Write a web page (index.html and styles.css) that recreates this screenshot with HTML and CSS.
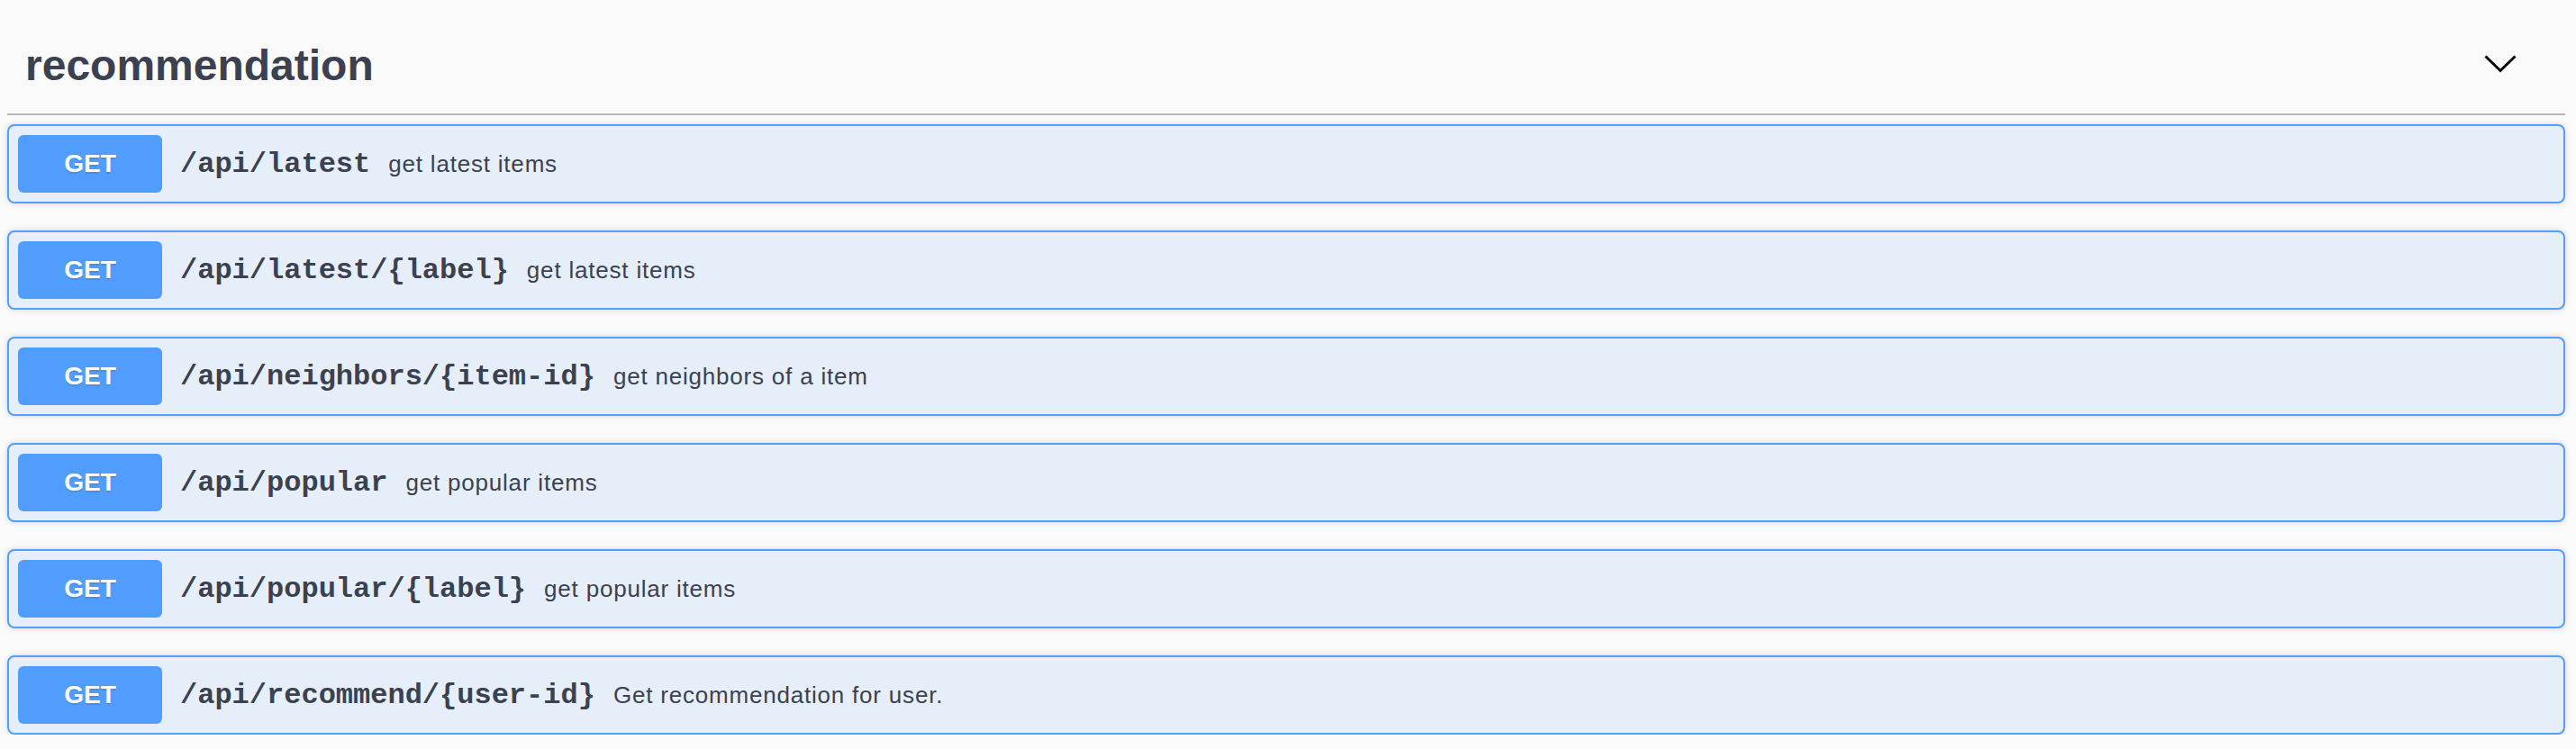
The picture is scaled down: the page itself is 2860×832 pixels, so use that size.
FILE: index.html
```html
<!DOCTYPE html>
<html lang="en">
<head>
<meta charset="utf-8">
<title>recommendation</title>
<link rel="stylesheet" href="styles.css">
</head>
<body>
<div class="section">
  <div class="tag-header">
    <h3 class="tag-title">recommendation</h3>
    <svg class="chevron" width="36" height="20" viewBox="0 0 36 20" aria-hidden="true">
      <polyline points="1.5,1.5 18,17.5 34.5,1.5" fill="none" stroke="#000" stroke-width="3"/>
    </svg>
  </div>
  <div class="ops">
    <div class="op">
      <span class="method">GET</span>
      <span class="path">/api/latest</span>
      <span class="desc">get latest items</span>
    </div>
    <div class="op">
      <span class="method">GET</span>
      <span class="path">/api/latest/{label}</span>
      <span class="desc">get latest items</span>
    </div>
    <div class="op">
      <span class="method">GET</span>
      <span class="path">/api/neighbors/{item-id}</span>
      <span class="desc">get neighbors of a item</span>
    </div>
    <div class="op">
      <span class="method">GET</span>
      <span class="path">/api/popular</span>
      <span class="desc">get popular items</span>
    </div>
    <div class="op">
      <span class="method">GET</span>
      <span class="path">/api/popular/{label}</span>
      <span class="desc">get popular items</span>
    </div>
    <div class="op">
      <span class="method">GET</span>
      <span class="path">/api/recommend/{user-id}</span>
      <span class="desc">Get recommendation for user.</span>
    </div>
  </div>
</div>
</body>
</html>
```

FILE: styles.css
```css
html, body {
  margin: 0;
  padding: 0;
  background: #fafafa;
  overflow: hidden;
}

.section {
  padding: 0 12px 0 8px;
  color: #3b4151;
  font-family: "Liberation Sans", Arial, sans-serif;
}

.tag-header {
  box-sizing: border-box;
  height: 128px;
  padding-top: 20px;
  display: flex;
  align-items: center;
  justify-content: space-between;
  border-bottom: 2px solid rgba(59, 65, 81, 0.36);
}

.tag-title {
  margin: 0;
  padding-left: 20px;
  font-size: 48px;
  line-height: 56px;
  font-weight: 700;
  color: #3b4151;
}

.chevron {
  display: block;
  margin-right: 54px;
  margin-bottom: 4px;
}

.ops {
  display: flex;
  flex-direction: column;
  gap: 30px;
  margin-top: 10px;
}

.op {
  box-sizing: border-box;
  height: 88px;
  display: flex;
  align-items: center;
  padding: 10px;
  border: 2px solid #539ffd;
  border-radius: 8px;
  background: #e6eff9;
  box-shadow: 0 0 6px rgba(0, 0, 0, 0.16);
}

.method {
  flex: 0 0 160px;
  height: 64px;
  display: flex;
  align-items: center;
  justify-content: center;
  border-radius: 6px;
  background: #519dfd;
  color: #fff;
  font-size: 28px;
  font-weight: 700;
  text-shadow: 0 2px 0 rgba(0, 0, 0, 0.1);
}

.path {
  padding: 0 20px;
  font-family: "Liberation Mono", "Courier New", monospace;
  font-size: 32px;
  font-weight: 700;
  color: #3b4151;
}

.desc {
  font-size: 26px;
  letter-spacing: 0.8px;
  color: #3b4151;
}
```
